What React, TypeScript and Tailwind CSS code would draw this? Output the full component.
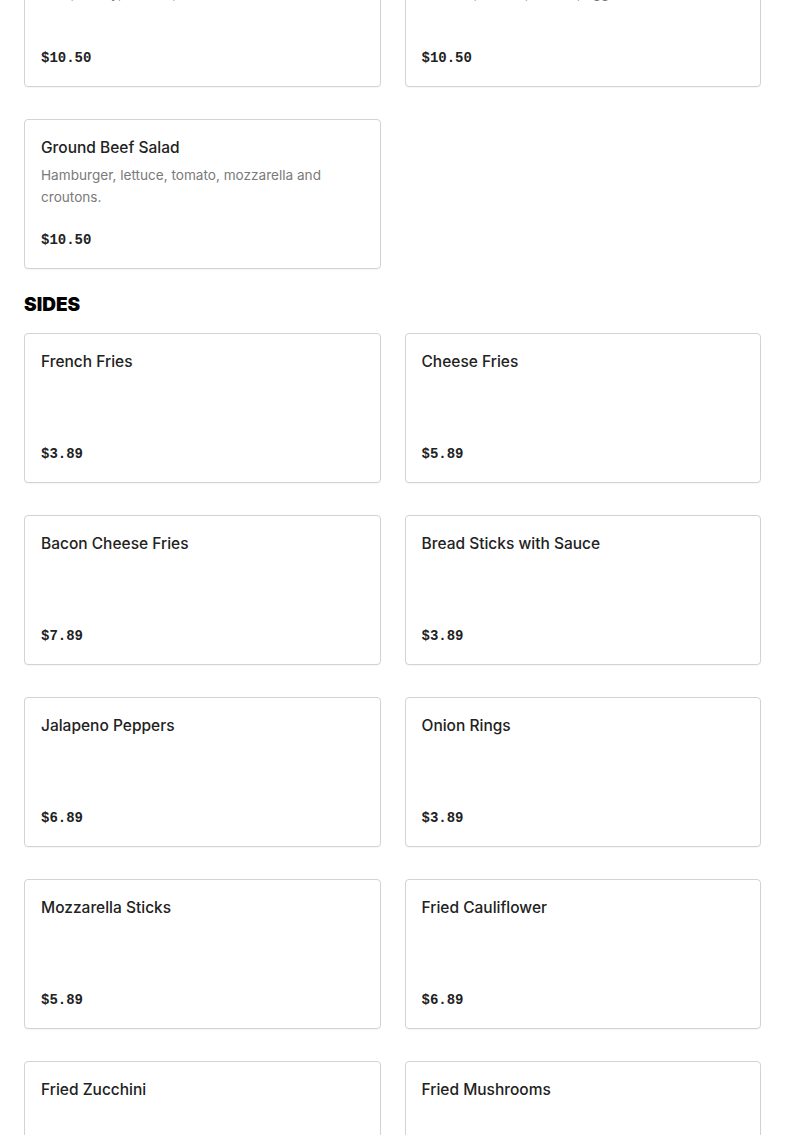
type Item = { name: string; desc?: string; price: string };

const salads: Item[] = [
  { name: "Chef Salad", desc: "Ham, turkey, cheese, lettuce and croutons.", price: "$10.50" },
  { name: "Grilled Chicken Salad", desc: "Chicken, lettuce, tomato, egg and croutons.", price: "$10.50" },
  { name: "Ground Beef Salad", desc: "Hamburger, lettuce, tomato, mozzarella and croutons.", price: "$10.50" },
];

const sides: Item[] = [
  { name: "French Fries", price: "$3.89" },
  { name: "Cheese Fries", price: "$5.89" },
  { name: "Bacon Cheese Fries", price: "$7.89" },
  { name: "Bread Sticks with Sauce", price: "$3.89" },
  { name: "Jalapeno Peppers", price: "$6.89" },
  { name: "Onion Rings", price: "$3.89" },
  { name: "Mozzarella Sticks", price: "$5.89" },
  { name: "Fried Cauliflower", price: "$6.89" },
  { name: "Fried Zucchini", price: "$5.89" },
  { name: "Fried Mushrooms", price: "$5.89" },
];

function Card({ item }: { item: Item }) {
  return (
    <div className="flex min-h-[150px] flex-col rounded border border-[#d3d3d3] bg-white p-4 shadow-[0_1px_1px_rgba(0,0,0,0.04)]">
      <h3 className="text-[15.5px] leading-6 font-medium text-[#222]">{item.name}</h3>
      {item.desc && (
        <p className="mt-1 text-[13.6px] leading-[22px] text-[#7a7a7a]">{item.desc}</p>
      )}
      <p className="mt-auto pt-5 font-['Liberation_Mono',monospace] text-sm leading-6 font-bold text-[#222]">
        {item.price}
      </p>
    </div>
  );
}

export default function App() {
  return (
    <div className="min-h-screen bg-white font-['Inter',sans-serif] text-[#222]">
      <div className="-mt-[63px] px-6 pb-10">
        <div className="grid grid-cols-2 gap-x-6 gap-y-8">
          {salads.map((s) => (
            <Card key={s.name} item={s} />
          ))}
        </div>

        <h2 className="mt-6 mb-4 text-[19px] leading-6 font-black text-black">SIDES</h2>
        <div className="grid grid-cols-2 gap-x-6 gap-y-8">
          {sides.map((s) => (
            <Card key={s.name} item={s} />
          ))}
        </div>
      </div>
    </div>
  );
}
